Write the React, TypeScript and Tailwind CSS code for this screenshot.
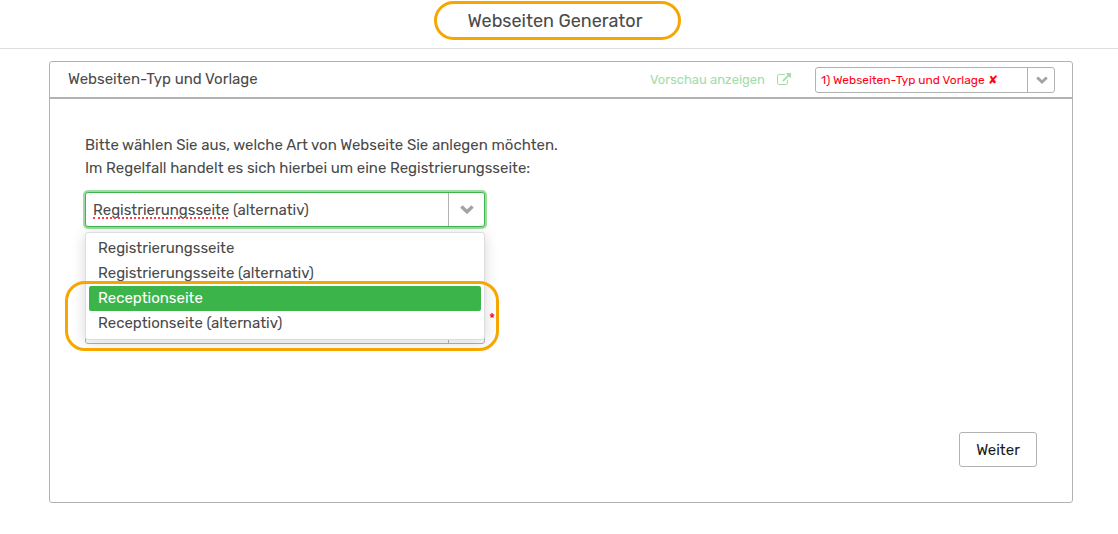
import { useState } from "react";
import clsx from "clsx";

const TYPES = [
  "Registrierungsseite",
  "Registrierungsseite (alternativ)",
  "Receptionseite",
  "Receptionseite (alternativ)",
];

function Chevron({ className }: { className?: string }) {
  return (
    <svg viewBox="0 0 14 9" className={className} fill="none" stroke="#a3a3a3" strokeWidth="3.4" aria-hidden="true">
      <path d="M1.4 1.6 7 6.8l5.6-5.2" />
    </svg>
  );
}

function ExternalLink() {
  return (
    <svg viewBox="0 0 1792 1792" className="w-3.5 h-3.5" fill="currentColor" aria-hidden="true">
      <path d="M1408 928v320q0 119-84.5 203.5t-203.5 84.5h-832q-119 0-203.5-84.5t-84.5-203.5v-832q0-119 84.5-203.5t203.5-84.5h704q14 0 23 9t9 23v64q0 14-9 23t-23 9h-704q-66 0-113 47t-47 113v832q0 66 47 113t113 47h832q66 0 113-47t47-113v-320q0-14 9-23t23-9h64q14 0 23 9t9 23zm384-864v512q0 26-19 45t-45 19-45-19l-176-176-652 652q-10 10-23 10t-23-10l-114-114q-10-10-10-23t10-23l652-652-176-176q-19-19-19-45t19-45 45-19h512q26 0 45 19t19 45z" />
    </svg>
  );
}

function ComboBox({
  label,
  value,
  onChange,
  active = false,
}: {
  label: string;
  value: string;
  onChange: (value: string) => void;
  active?: boolean;
}) {
  return (
    <div
      className={clsx(
        "relative flex h-[35px] rounded-[3px] border bg-white",
        active ? "border-[#3bb54a] ring-2 ring-[#9ddaa4]" : "border-[#b2b2b2]"
      )}
    >
      <input
        type="text"
        role="combobox"
        aria-label={label}
        aria-expanded={active}
        aria-controls="type-options"
        spellCheck={false}
        value={value}
        onChange={(e) => onChange(e.target.value)}
        className="min-w-0 flex-1 px-[7px] pt-0.5 bg-transparent outline-none"
      />
      {/* spelling mark under the first word */}
      {active && <span className="absolute left-[7px] top-6 w-[135px] border-b-2 border-dotted border-[#ff3b45]" />}
      <button type="button" aria-label={`${label} öffnen`} className="flex w-9 items-center justify-center border-l border-[#b2b2b2]">
        <Chevron className="w-3.5 h-[9px]" />
      </button>
    </div>
  );
}

export default function App() {
  const [type, setType] = useState("Registrierungsseite (alternativ)");
  const [template, setTemplate] = useState("");

  return (
    <div className="min-h-screen bg-white text-[15px] text-[#4a4a4a] [font-family:Rubik,Roboto,sans-serif]">
      <header className="flex h-[49px] justify-center border-b border-[#ddd] pt-px pr-1">
        <div className="flex h-[39px] w-[247px] items-center justify-center rounded-[20px] border-3 border-[#f7a600]">
          <h1 className="pr-1 text-[18px] leading-6">Webseiten Generator</h1>
        </div>
      </header>

      <main className="ml-[49px] mr-[45px] mt-3 rounded-[3px] border border-[#b2b2b2]">
        <div className="flex h-[37px] items-center border-b-2 border-[#b2b2b2] pl-[18px] pr-[17px]">
          <h2 className="flex-1">Webseiten-Typ und Vorlage</h2>
          <a href="#vorschau" className="flex items-center gap-3 text-[13px] text-[#a4dcab]">
            Vorschau anzeigen
            <ExternalLink />
          </a>
          <div className="relative ml-6 h-[26px] w-60">
            <select
              aria-label="Schritt"
              className="h-full w-full appearance-none rounded-[3px] border border-[#b2b2b2] pl-[5px] pr-8 text-[12px] text-[#ff0014] outline-none"
            >
              <option>1) Webseiten-Typ und Vorlage ✘</option>
            </select>
            <span className="pointer-events-none absolute inset-y-0 right-0 flex w-7 items-center justify-center border-l border-[#b2b2b2]">
              <Chevron className="w-3 h-2" />
            </span>
          </div>
        </div>

        <div className="p-[35px]">
          <p className="leading-[23px]">
            Bitte wählen Sie aus, welche Art von Webseite Sie anlegen möchten.
            <br />
            Im Regelfall handelt es sich hierbei um eine Registrierungsseite:
          </p>

          <div className="relative mt-3 w-[400px] max-w-full">
            <ComboBox label="Webseiten-Typ" value={type} onChange={setType} active />
            <div className="mt-[82px]">
              <ComboBox label="Vorlage" value={template} onChange={setTemplate} />
            </div>
            <span className="absolute left-full top-[120px] pl-1 text-[14px] leading-4 text-[#ff0014]">*</span>

            <ul
              id="type-options"
              role="listbox"
              aria-label="Webseiten-Typ"
              className="absolute inset-x-0 top-10 rounded-[3px] border border-[#ddd] bg-white p-[3px] shadow-[0_2px_14px_rgba(0,0,0,0.16)]"
            >
              {TYPES.map((name) => (
                <li
                  key={name}
                  role="option"
                  aria-selected={name === type}
                  onClick={() => setType(name)}
                  className={clsx(
                    "h-[25px] rounded-[2px] px-[9px] leading-[25px]",
                    name === "Receptionseite" && "bg-[#3bb54a] text-white"
                  )}
                >
                  {name}
                </li>
              ))}
            </ul>

            {/* highlight around the Reception entries */}
            <div className="pointer-events-none absolute -left-5 -right-3.5 top-[89px] h-[70px] rounded-[20px] border-3 border-[#f7a600]" />
          </div>

          <div className="mt-[88px] flex justify-end">
            <button type="button" className="h-[35px] w-[78px] rounded-[3px] border border-[#b2b2b2] pt-px text-[#1a1a1a]">
              Weiter
            </button>
          </div>
        </div>
      </main>
    </div>
  );
}
